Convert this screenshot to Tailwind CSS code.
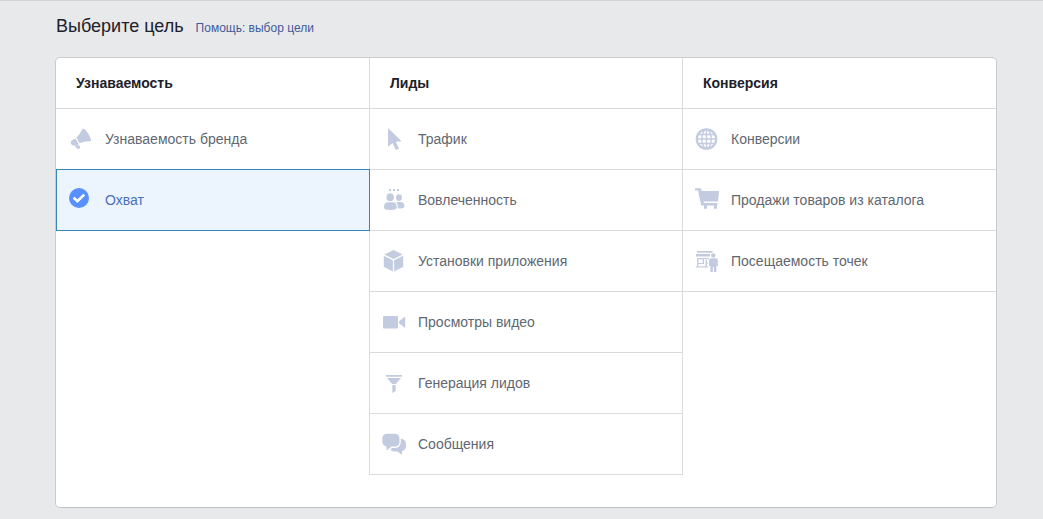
<!DOCTYPE html>
<html lang="ru">
<head>
    <meta charset="UTF-8">
    <meta name="viewport" content="width=device-width, initial-scale=1.0">
    <title>Выберите цель</title>
    <script src="https://cdn.jsdelivr.net/npm/@tailwindcss/browser@4"></script>
</head>
<body class="bg-[#e8e9eb] h-screen overflow-hidden border-t border-[#d2d3d6] font-['Liberation_Sans',Arial,sans-serif] text-sm text-[#616770]">
    <!-- Title -->
    <div class="flex items-baseline gap-3 pl-14 h-14 pt-[11px]">
        <h1 class="text-[18px] leading-7 text-[#1d2129]">Выберите цель</h1>
        <a href="#" class="text-xs text-[#3f5a99]">Помощь: выбор цели</a>
    </div>

    <!-- Objectives -->
    <div class="ml-[55px] w-[942px] h-[451px] flex items-start bg-white border border-[#c9cbcd] border-b-[#bfc1c3] rounded-[5px]">
        <!-- Awareness -->
        <div class="w-[313px]">
            <h2 class="h-[51px] flex items-center pl-5 border-b border-[#dadbdd] font-bold text-[#1d2129]">Узнаваемость</h2>
            <div class="h-[61px] flex items-center gap-[13px] pl-3 border-b border-[#dadbdd]">
                <svg class="size-6 fill-[#c3cbe0]" viewBox="0 0 24 24">
                    <path d="M14 2.4Q15.5 1 17 2.6Q21 6.5 23 12.4Q23.4 14 21.8 14.2Q16 14 11.6 16.2L8.3 10.8Q12 7.5 14 2.4Z"/>
                    <path d="M7.5 11.6L10.6 16.8L7.4 18.3Q4.4 19.2 3.1 17Q2 14.4 4.4 13Z"/>
                    <path d="M6.6 18.4L10.4 17L10.3 18.4L12.4 19.6L11.6 21.6L9.8 22.2Z"/>
                </svg>
                <span>Узнаваемость бренда</span>
            </div>
            <div class="relative z-10 -mt-px w-[314px] h-[62px] flex items-center gap-[13px] pl-[11px] bg-[#ecf5fd] border border-[#3a85b8] text-[#4a70bd]">
                <svg class="size-6" viewBox="0 0 24 24">
                    <circle cx="11" cy="10" r="10" fill="#5890ff"/>
                    <path d="M5.6 9.6L9.4 13.2L16.2 6.6" fill="none" stroke="#fff" stroke-width="2.6"/>
                </svg>
                <span>Охват</span>
            </div>
        </div>

        <!-- Leads -->
        <div class="w-[314px] border-x border-[#dadbdd]">
            <h2 class="h-[51px] flex items-center pl-5 border-b border-[#dadbdd] font-bold text-[#1d2129]">Лиды</h2>
            <div class="h-[61px] flex items-center gap-3 pl-3 border-b border-[#dadbdd]">
                <svg class="size-6 fill-[#c3cbe0]" viewBox="0 0 24 24">
                    <path d="M6 1L19.6 14.2L13.8 14.7L17 21.4L13.8 22.9L10.6 16L6 19.8Z"/>
                </svg>
                <span>Трафик</span>
            </div>
            <div class="h-[61px] flex items-center gap-3 pl-3 border-b border-[#dadbdd]">
                <svg class="size-6 fill-[#c3cbe0]" viewBox="0 0 24 24">
                    <path d="M7 1h2v2H7zM11 1h2v2h-2zM15 1h2v2h-2z"/>
                    <ellipse cx="8.2" cy="9.2" rx="3.7" ry="4"/>
                    <path d="M2 19.5Q2 14.2 6 14.2H10.5Q14.8 14.2 14.8 19.5Q14.8 22 8.4 22Q2 22 2 19.5Z"/>
                    <ellipse cx="17" cy="9.6" rx="3" ry="3.4"/>
                    <path d="M14.2 14.1H18.5Q22.4 14.1 22.4 18.4Q22.4 20.6 15.8 20.5Q16.2 16.4 14.2 14.1Z"/>
                </svg>
                <span>Вовлеченность</span>
            </div>
            <div class="h-[61px] flex items-center gap-3 pl-3 border-b border-[#dadbdd]">
                <svg class="size-6 fill-[#c3cbe0]" viewBox="0 0 24 24">
                    <path d="M11.5 1L20.6 5.5L11.5 10L2.4 5.5Z"/>
                    <path d="M1.8 6.7L10.9 11.2V22.6L1.8 17.8Z"/>
                    <path d="M21.2 6.7L12.1 11.2V22.6L21.2 17.8Z"/>
                </svg>
                <span>Установки приложения</span>
            </div>
            <div class="h-[61px] flex items-center gap-3 pl-3 border-b border-[#dadbdd]">
                <svg class="size-6 fill-[#c3cbe0]" viewBox="0 0 24 24">
                    <rect x="1" y="6" width="15" height="12.5" rx="1"/>
                    <path d="M17 11.2L22.4 7Q23.2 6.4 23.2 7.4V17Q23.2 18 22.4 17.4L17 13.2Z"/>
                </svg>
                <span>Просмотры видео</span>
            </div>
            <div class="h-[61px] flex items-center gap-3 pl-3 border-b border-[#dadbdd]">
                <svg class="size-6 fill-[#c3cbe0]" viewBox="0 0 24 24">
                    <path d="M4 4h16v1.8H4zM5 6.9H19L13.8 13H10.2ZM10.3 14H13.7V20L10.3 22Z"/>
                </svg>
                <span>Генерация лидов</span>
            </div>
            <div class="h-[61px] flex items-center gap-3 pl-3 border-b border-[#dadbdd]">
                <svg class="size-6 fill-[#c3cbe0]" viewBox="0 0 24 24">
                    <path d="M5.5 1.8H12.5Q17.5 1.8 17.5 7V9.5Q17.5 14.6 12.5 14.6H9.5L4.5 18.4V14.4Q.3 13.6 .3 9.5V7Q.3 1.8 5.5 1.8Z"/>
                    <path d="M18.8 6.6Q24 7.6 24 12V14Q24 18 20 19V22.8L15.2 19.6H12.2Q9.4 19.3 8.4 17.4L10 16H13Q18.8 15.6 18.8 9.8Z"/>
                </svg>
                <span>Сообщения</span>
            </div>
        </div>

        <!-- Conversion -->
        <div class="w-[313px]">
            <h2 class="h-[51px] flex items-center pl-5 border-b border-[#dadbdd] font-bold text-[#1d2129]">Конверсия</h2>
            <div class="h-[61px] flex items-center gap-3 pl-3 border-b border-[#dadbdd]">
                <svg class="size-6 fill-none stroke-[#c3cbe0]" viewBox="0 0 24 24">
                    <circle cx="11.5" cy="12" r="9.7" stroke-width="2.2"/>
                    <path d="M11.5 2V22M2 12H21M3.8 7.5H19.2M3.8 16.5H19.2" stroke-width="1.4"/>
                    <ellipse cx="11.5" cy="12" rx="4.7" ry="9.5" stroke-width="1.4"/>
                </svg>
                <span>Конверсии</span>
            </div>
            <div class="h-[61px] flex items-center gap-3 pl-3 border-b border-[#dadbdd]">
                <svg class="size-6 fill-[#c3cbe0]" viewBox="0 0 24 24">
                    <path d="M0 .3H6L6.8 3H24L23 13.4H8.6L9 15H22.4V17.6H21.9V20.8H18.9V17.6H12V20.8H9V17.6H6.2L3 2.6H0Z"/>
                </svg>
                <span>Продажи товаров из каталога</span>
            </div>
            <div class="h-[61px] flex items-center gap-3 pl-3 border-b border-[#dadbdd]">
                <svg class="size-6 fill-[#c3cbe0]" viewBox="0 0 24 24">
                    <path d="M2 2H17.5V3.8H2zM1.4 5H15V7.6H.6z"/>
                    <path d="M2 9H3.4V17H2zM7.6 9H9V15H7.6zM2 9H14V10.2H2zM3 14H9V15H3zM10.6 11H12V17.4H10.6zM10.6 13.4H13V14.6H10.6zM.8 17.2H13.2V18.6H.8z"/>
                    <circle cx="18.3" cy="6.4" r="2.2"/>
                    <path d="M16 9.3H20.8Q22.8 9.3 22.8 11.2V17H21.4V23H18.9V18H17.9V23H15.4V17H14V11.2Q14 9.3 16 9.3Z"/>
                </svg>
                <span>Посещаемость точек</span>
            </div>
        </div>
    </div>
</body>
</html>
